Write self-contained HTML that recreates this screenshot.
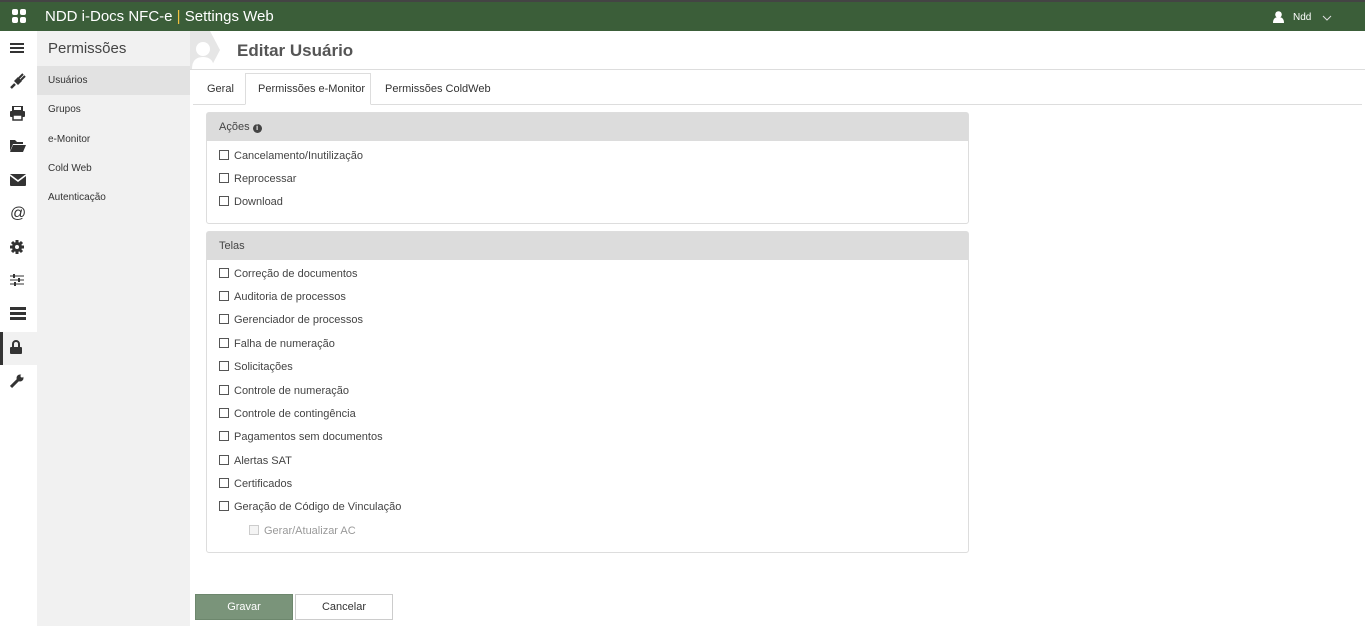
<!DOCTYPE html>
<html><head><meta charset="utf-8"><style>
*{box-sizing:border-box;margin:0;padding:0}
body{width:1365px;height:626px;overflow:hidden;font-family:"Liberation Sans",sans-serif;background:#fff;position:relative;color:#333}
.top{position:absolute;left:0;top:0;width:1365px;height:31px;background:#3b5e39;border-top:2px solid #444}
.top .t{position:absolute;left:45px;top:6px;color:#fff;font-size:15px}
.top .t span{color:#f0c040}
.strip{position:absolute;left:0;top:31px;width:37px;height:595px;background:#fff}
.ico{position:absolute;left:10px;width:16px;height:16px;color:#333;font-size:15px;text-align:center;line-height:16px}
.sub{position:absolute;left:37px;top:31px;width:153px;height:595px;background:#f1f1f1}
.sub h2{font-size:15px;font-weight:normal;color:#444;position:absolute;left:11px;top:9px}
.sub .it{position:absolute;left:0;width:153px;height:29px;padding-left:11px;font-size:10px;line-height:29px;color:#333}
.hdr{position:absolute;left:237px;top:41px;font-size:17px;font-weight:bold;color:#555}
.hl{position:absolute;left:190px;top:69px;width:1175px;height:1px;background:#ddd}
.tabs{position:absolute;left:193px;top:104px;width:1169px;height:1px;background:#ddd}
.tab{position:absolute;top:83px;font-size:11px;color:#333}
.tabact{position:absolute;left:245px;top:73px;width:126px;height:32px;border:1px solid #ddd;border-bottom:1px solid #fff;background:#fff}
.panel{position:absolute;left:206px;width:763px;border:1px solid #ddd;border-radius:3px;background:#fff}
.ph{height:28px;background:#dcdcdc;font-size:11px;line-height:28px;padding-left:12px;color:#444}
.cb{position:absolute;left:12px;font-size:11px;color:#444;white-space:nowrap}
.cb i{display:inline-block;width:10px;height:10px;border:1px solid #555;vertical-align:-1px;margin-right:5px;background:#fff}
.btn{position:absolute;top:594px;height:26px;width:98px;font-size:11px;text-align:center;line-height:24px}
</style></head><body>
<div class="top">
<svg style="position:absolute;left:12px;top:7px" width="14" height="14"><rect x="0" y="0" width="6" height="6" rx="2" fill="#fff"/><rect x="8" y="0" width="6" height="6" rx="2" fill="#fff"/><rect x="0" y="8" width="6" height="6" rx="2" fill="#fff"/><rect x="8" y="8" width="6" height="6" rx="2" fill="#fff"/></svg>
<div class="t">NDD i-Docs NFC-e <span>|</span> Settings Web</div>
<svg style="position:absolute;left:1273px;top:9px" width="11" height="12"><circle cx="5.5" cy="3.5" r="3.3" fill="#fff"/><path d="M0 12 Q0 6 5.5 6 Q11 6 11 12Z" fill="#fff"/></svg>
<div style="position:absolute;left:1293px;top:10px;color:#fff;font-size:10px">Ndd</div>
<svg style="position:absolute;left:1322px;top:13px" width="10" height="6"><path d="M1 1 L5 5 L9 1" stroke="#ddd" fill="none"/></svg>
</div>
<div class="strip">
<svg class="ico" style="top:11px" width="14" height="12"><rect y="1" width="14" height="2" fill="#333"/><rect y="5" width="14" height="2" fill="#333"/><rect y="9" width="14" height="2" fill="#333"/></svg>
<svg class="ico" style="top:42px" width="16" height="16"><path d="M1 15 L5 11" stroke="#333" stroke-width="2.5"/><path d="M4 8 L8 4 L12 8 L8 12Z" fill="#333"/><path d="M9 5 L13 1 M11 7 L15 3" stroke="#333" stroke-width="2"/></svg>
<svg class="ico" style="top:75px" width="15" height="14"><rect x="3" y="0" width="9" height="5" fill="none" stroke="#333" stroke-width="2"/><rect x="0" y="5" width="15" height="6" rx="1" fill="#333"/><rect x="3" y="9" width="9" height="5" fill="#fff" stroke="#333" stroke-width="1.5"/></svg>
<svg class="ico" style="top:108px" width="16" height="13"><path d="M0 1h5l2 2h6v2H3L0 12Z" fill="#333"/><path d="M3 6h13l-3 7H0Z" fill="#333"/></svg>
<svg class="ico" style="top:143px" width="16" height="12"><rect width="16" height="12" rx="1" fill="#333"/><path d="M0 1 L8 7 L16 1" stroke="#fff" stroke-width="1.5" fill="none"/></svg>
<div class="ico" style="top:175px;font-size:16px">@</div>
<svg class="ico" style="top:209px" width="14" height="14"><circle cx="7" cy="7" r="5" fill="#333"/><g stroke="#333" stroke-width="3"><path d="M7 0v14M0 7h14M2 2l10 10M12 2L2 12"/></g><circle cx="7" cy="7" r="2" fill="#fff"/></svg>
<svg class="ico" style="top:242px" width="14" height="14"><g stroke="#333"><path d="M0 3h14M0 7h14M0 11h14"/></g><rect x="3" y="1" width="2" height="4" fill="#333"/><rect x="8" y="5" width="2" height="4" fill="#333"/><rect x="4" y="9" width="2" height="4" fill="#333"/></svg>
<svg class="ico" style="top:276px" width="16" height="13"><rect width="16" height="3" fill="#333"/><rect y="5" width="16" height="3" fill="#333"/><rect y="10" width="16" height="3" fill="#333"/></svg>
<div style="position:absolute;left:0;top:301px;width:37px;height:33px;background:#f1f1f1;border-left:3px solid #333"></div>
<svg class="ico" style="top:309px" width="12" height="14"><path d="M3 7V4a3 3 0 0 1 6 0v3" stroke="#333" stroke-width="2" fill="none"/><rect y="7" width="12" height="7" rx="1" fill="#333"/></svg>
<svg class="ico" style="top:343px" width="14" height="14"><path d="M1 13 L8 6" stroke="#333" stroke-width="3"/><circle cx="10" cy="4" r="3.5" fill="#333"/><circle cx="12" cy="2" r="1.5" fill="#fff"/></svg>
</div>
<div class="sub">
<h2>Permissões</h2>
<div class="it" style="top:35px;background:#e2e2e2">Usuários</div>
<div class="it" style="top:64px">Grupos</div>
<div class="it" style="top:94px">e-Monitor</div>
<div class="it" style="top:123px">Cold Web</div>
<div class="it" style="top:152px">Autenticação</div>
</div>
<svg style="position:absolute;left:190px;top:31px" width="40" height="38"><path d="M0 0H20L30 19L20 38H0Z" fill="#e6e6e6"/><circle cx="13" cy="18" r="7" fill="#fff"/><path d="M2 38Q2 26 13 26Q24 26 24 38Z" fill="#fff"/></svg>
<div class="hdr">Editar Usuário</div>
<div class="hl"></div>
<div class="tabs"></div>
<div class="tabact"></div>
<div class="tab" style="left:207px">Geral</div>
<div class="tab" style="left:258px">Permissões e-Monitor</div>
<div class="tab" style="left:385px">Permissões ColdWeb</div>
<div class="panel" style="top:112px;height:112px">
<div class="ph">Ações <span style="display:inline-block;width:9px;height:9px;border-radius:50%;background:#444;color:#fff;font-size:7px;line-height:9px;text-align:center;font-weight:bold;vertical-align:0">i</span></div>
<div class="cb" style="top:37px"><i></i>Cancelamento/Inutilização</div>
<div class="cb" style="top:60px"><i></i>Reprocessar</div>
<div class="cb" style="top:83px"><i></i>Download</div>
</div>
<div class="panel" style="top:231px;height:322px">
<div class="ph">Telas</div>
<div class="cb" style="top:36px"><i></i>Correção de documentos</div>
<div class="cb" style="top:59px"><i></i>Auditoria de processos</div>
<div class="cb" style="top:82px"><i></i>Gerenciador de processos</div>
<div class="cb" style="top:106px"><i></i>Falha de numeração</div>
<div class="cb" style="top:129px"><i></i>Solicitações</div>
<div class="cb" style="top:153px"><i></i>Controle de numeração</div>
<div class="cb" style="top:176px"><i></i>Controle de contingência</div>
<div class="cb" style="top:199px"><i></i>Pagamentos sem documentos</div>
<div class="cb" style="top:223px"><i></i>Alertas SAT</div>
<div class="cb" style="top:246px"><i></i>Certificados</div>
<div class="cb" style="top:269px"><i></i>Geração de Código de Vinculação</div>
<div class="cb" style="top:293px;left:42px;color:#999"><i style="border-color:#ccc;background:#f4f4f4"></i>Gerar/Atualizar AC</div>
</div>
<div class="btn" style="left:195px;background:#7a947a;color:#fff;border:1px solid #6d876d">Gravar</div>
<div class="btn" style="left:295px;background:#fff;color:#333;border:1px solid #ccc">Cancelar</div>
</body></html>
